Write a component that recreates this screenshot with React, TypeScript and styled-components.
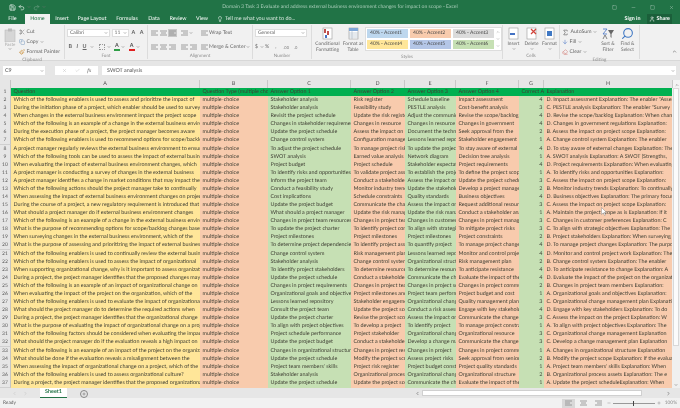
import React from 'react'
import styled, { createGlobalStyle } from 'styled-components'
import {
  Save, Undo2, Redo2, Lightbulb, User, Scissors, Copy, Paintbrush, Minus, Square, X, Check,
  ChevronDown, ChevronUp, ChevronLeft, ChevronRight, Plus, Search, Sigma, Eraser, ArrowDown,
} from 'lucide-react'

const COLS = '11px 189px 68px 83px 54px 51px 63px 25px 129px'

const YELLOW = '#ffe699'
const ORANGE = '#f8cbad'
const GREEN = '#c6e0b4'

const COLUMN_FILLS = [YELLOW, ORANGE, GREEN, ORANGE, GREEN, ORANGE, GREEN, ORANGE]
const HEADERS = ['Question', 'Question Type (multiple choice)', 'Answer Option 1', 'Answer Option 2', 'Answer Option 3', 'Answer Option 4', 'Correct Answer', 'Explanation']

// question, option 1-4, correct, explanation
const DATA: [string, string, string, string, string, number, string][] = [
  ['Which of the following enablers is used to assess and prioritize the impact of', 'Stakeholder analysis', 'Risk register', 'Schedule baseline', 'Impact assessment', 4, 'D. Impact assessment Explanation: The enabler "Assess'],
  ['During the initiation phase of a project, which enabler should be used to survey', 'Stakeholder analysis', 'Feasibility study', 'PESTLE analysis', 'Cost-benefit analysis', 3, 'C. PESTLE analysis Explanation: The enabler "Survey'],
  ['When changes in the external business environment impact the project scope', 'Revisit the project schedule', 'Update the risk register', 'Adjust the communication', 'Revise the scope/backlog', 4, 'D. Revise the scope/backlog Explanation: When changes'],
  ['Which of the following is an example of a change in the external business environment', 'Changes in stakeholder requirements', 'Changes in resource', 'Changes in resource', 'Changes in government', 4, 'D. Changes in government regulations Explanation:'],
  ['During the execution phase of a project, the project manager becomes aware', 'Update the project schedule', 'Assess the impact on', 'Document the technical', 'Seek approval from the', 2, 'B. Assess the impact on project scope Explanation:'],
  ['Which of the following enablers is used to recommend options for scope/backlog', 'Change control system', 'Configuration management', 'Lessons learned repository', 'Stakeholder engagement', 1, 'A. Change control system Explanation: The enabler'],
  ['A project manager regularly reviews the external business environment to ensure', 'To adjust the project schedule', 'To manage project risks', 'To update the project', 'To stay aware of external', 4, 'D. To stay aware of external changes Explanation: The'],
  ['Which of the following tools can be used to assess the impact of external business', 'SWOT analysis', 'Earned value analysis', 'Network diagram', 'Decision tree analysis', 1, 'A. SWOT analysis Explanation: A SWOT (Strengths,'],
  ['When evaluating the impact of external business environment changes, which', 'Project budget', 'Project schedule', 'Stakeholder expectations', 'Project requirements', 4, 'D. Project requirements Explanation: When evaluating'],
  ['A project manager is conducting a survey of changes in the external business', 'To identify risks and opportunities', 'To validate project assumptions', 'To establish the project', 'To define the project scope', 1, 'A. To identify risks and opportunities Explanation:'],
  ['A project manager identifies a change in market conditions that may impact the', 'Inform the project team', 'Conduct a stakeholder', 'Assess the impact on', 'Update the project schedule', 3, 'C. Assess the impact on project scope Explanation:'],
  ['Which of the following actions should the project manager take to continually', 'Conduct a feasibility study', 'Monitor industry trends', 'Update the stakeholder', 'Develop a project management', 2, 'B. Monitor industry trends Explanation: To continually'],
  ['When assessing the impact of external business environment changes on project', 'Cost implications', 'Schedule constraints', 'Quality standards', 'Business objectives', 4, 'D. Business objectives Explanation: The primary focus'],
  ['During the course of a project, a new regulatory requirement is introduced that', 'Update the project budget', 'Communicate the changes', 'Assess the impact on', 'Request additional resources', 3, 'C. Assess the impact on project scope Explanation:'],
  ['What should a project manager do if external business environment changes', 'What should a project manager', 'Update the risk management', 'Update the risk management', 'Conduct a stakeholder analysis', 1, 'A. Maintain the project scope as is Explanation: If it'],
  ['Which of the following is an example of a change in the external business environment', 'Changes in project team resources', 'Changes in project team', 'Changes in customer', 'Changes in project management', 3, 'C. Changes in customer preferences Explanation: C'],
  ['What is the purpose of recommending options for scope/backlog changes based', 'To update the project charter', 'To identify project constraints', 'To align with strategic', 'To mitigate project risks', 3, 'C. To align with strategic objectives Explanation: The'],
  ['When surveying changes in the external business environment, which of the', 'Project milestones', 'Project milestones', 'Project milestones', 'Project constraints', 2, 'B. Project stakeholders Explanation: When surveying'],
  ['What is the purpose of assessing and prioritizing the impact of external business', 'To determine project dependencies', 'To identify project assumptions', 'To quantify project', 'To manage project changes', 4, 'D. To manage project changes Explanation: The purpose'],
  ['Which of the following enablers is used to continually review the external business', 'Change control system', 'Risk management plan', 'Lessons learned repository', 'Monitor and control project', 4, 'D. Monitor and control project work Explanation: The'],
  ['Which of the following enablers is used to assess the impact of organizational', 'Stakeholder analysis', 'Change control system', 'Organizational structure', 'Risk management plan', 2, 'B. Change control system Explanation: The enabler'],
  ['When supporting organizational change, why is it important to assess organizational', 'To identify project stakeholders', 'To determine resource', 'To determine resource', 'To anticipate resistance', 4, 'D. To anticipate resistance to change Explanation: A'],
  ['During a project, the project manager identifies that the proposed changes may', 'Update the project schedule', 'Conduct a stakeholder', 'Communicate the changes', 'Evaluate the impact of the', 4, 'D. Evaluate the impact of the project on the organization'],
  ['Which of the following is an example of an impact of organizational change on', 'Changes in project requirements', 'Changes in project team', 'Changes in project scope', 'Changes in project communication', 2, 'B. Changes in project team members Explanation:'],
  ['When evaluating the impact of the project on the organization, which of the', 'Organizational goals and objectives', 'Project milestones and', 'Project team performance', 'Project budget and cost', 1, 'A. Organizational goals and objectives Explanation:'],
  ['Which of the following enablers is used to evaluate the impact of organizational', 'Lessons learned repository', 'Stakeholder engagement', 'Organizational change', 'Quality management plan', 3, 'C. Organizational change management plan Explanation'],
  ['What should the project manager do to determine the required actions when', 'Consult the project team', 'Update the project scope', 'Conduct a risk assessment', 'Engage with key stakeholders', 4, 'D. Engage with key stakeholders Explanation: To do'],
  ['During a project, the project manager identifies that the organizational change', 'Update the project charter', 'Revise the project scope', 'Assess the impact on', 'Communicate the changes', 3, 'C. Assess the impact on the project Explanation: W'],
  ['What is the purpose of evaluating the impact of organizational change on a project', 'To align with project objectives', 'To develop a project', 'To identify project', 'To manage project constraints', 1, 'A. To align with project objectives Explanation: The'],
  ['Which of the following factors should be considered when evaluating the impact', 'Project schedule performance', 'Project stakeholder', 'Organizational change', 'Organizational resource', 3, 'C. Organizational change management Explanation'],
  ['What should the project manager do if the evaluation reveals a high impact on', 'Update the project budget', 'Conduct a stakeholder', 'Develop a change management', 'Communicate the changes', 3, 'C. Develop a change management plan Explanation'],
  ['Which of the following is an example of an impact of the project on the organization', 'Changes in organizational structure', 'Changes in project resources', 'Changes in project', 'Changes in project communication', 1, 'A. Changes in organizational structure Explanation'],
  ['What should be done if the evaluation reveals a misalignment between the', 'Update the project schedule', 'Modify the project scope', 'Assess project risks', 'Seek approval from senior', 2, 'B. Modify the project scope Explanation: If the evaluation'],
  ['When assessing the impact of organizational change on a project, which of the', "Project team members' skills", 'Project risk register', 'Project budget constraints', 'Project quality standards', 1, "A. Project team members' skills Explanation: When"],
  ['Which of the following enablers is used to assess organizational culture?', 'Stakeholder analysis', 'Organizational process', 'Organizational change', 'Organizational structure', 2, 'B. Organizational process assets Explanation: The e'],
  ['During a project, the project manager identifies that the proposed organizational', 'Update the project schedule', 'Update the project scope', 'Communicate the changes', 'Evaluate the impact of the', 1, 'A. Update the project scheduleExplanation: When'],
]

const TABS: [string, number][] = [['Insert', 24], ['Page Layout', 36], ['Formulas', 34], ['Data', 20], ['Review', 28], ['View', 20]]

const ACCENTS: [string, string][] = [
  ['40% - Accent1', '#bdd7ee'], ['40% - Accent2', '#f8cbad'], ['40% - Accent3', '#dbdbdb'],
  ['40% - Accent4', '#ffe699'], ['40% - Accent5', '#b4c6e7'], ['40% - Accent6', '#c6e0b4'],
]

const Caret = () => <ChevronDown size={4} strokeWidth={3} color="#777" />

const AlignIcon = ({ on, mode = 0 }: { on?: boolean; mode?: number }) => (
  <ToolBtn $on={on}>
    <svg width="7" height="6" viewBox="0 0 7 6" stroke="#8a8a8a" strokeWidth="0.8">
      <path d={mode === 0 ? 'M0 1h7M0 3h5M0 5h7' : mode === 1 ? 'M0 1h7M1 3h5M0 5h7' : 'M0 1h7M2 3h5M0 5h7'} />
    </svg>
  </ToolBtn>
)

const LargeIcon = ({ kind }: { kind: string }) => (
  <svg width="13" height="13" viewBox="0 0 13 13">
    <rect x="2" y="1" width="9" height="11" fill="#fff" stroke="#9a9a9a" strokeWidth="0.6" />
    {kind === 'cond' && <path d="M3 2h2v4H3zM6 4h2v4H6z" fill="#c0504d" />}
    {kind === 'cond' && <path d="M4 8h2v3H4z" fill="#4472c4" />}
    {kind === 'table' && <path d="M2 1h9v3H2z" fill="#7fa7d8" />}
    {kind === 'table' && <path d="M2 6h9M2 8h9M2 10h9M5 4v8" stroke="#9ab" strokeWidth="0.5" />}
    {kind === 'insert' && <path d="M3 6h5v2H3z" fill="#4472c4" />}
    {kind === 'delete' && <path d="M6 2l5 5M11 2L6 7" stroke="#d0433a" strokeWidth="1.2" />}
    {kind === 'format' && <path d="M4 4h5v5H4z" fill="#3f78c4" />}
  </svg>
)

const App = () => {
  return (
    <Window>
      <GlobalStyle />
      <TitleBar>
        <Quick>
          <Save size={7} color="#fff" />
          <Undo2 size={7} color="#fff" />
          <Caret />
          <Redo2 size={7} color="#6f9f85" />
          <Caret />
        </Quick>
        <Title>Domain 3 Task 3 Evaluate and address external business environment changes for impact on scope - Excel</Title>
        <WindowControls>
          <Square size={5} color="#a8c8b6" />
          <Minus size={5} color="#a8c8b6" />
          <Square size={5} color="#a8c8b6" />
          <X size={5} color="#a8c8b6" />
        </WindowControls>
      </TitleBar>

      <TabBar>
        <Tab $w={25}>File</Tab>
        <Tab $w={25} $active>Home</Tab>
        {TABS.map(([name, w]) => (
          <Tab key={name} $w={w}>{name}</Tab>
        ))}
        <TellMe>
          <Lightbulb size={6} color="#fff" />
          Tell me what you want to do...
        </TellMe>
        <SignIn>Sign in</SignIn>
        <ShareButton>
          <User size={6} color="#fff" />
          Share
        </ShareButton>
      </TabBar>

      <Ribbon>
        <Group $w={65}>
          <GroupBody>
            <PasteButton>
              <svg width="12" height="14" viewBox="0 0 12 14">
                <rect x="1" y="2" width="10" height="12" fill="#d6d6d6" stroke="#b5b5b5" strokeWidth="0.5" />
                <rect x="4" y="0.5" width="4" height="3" fill="#bbb" />
              </svg>
              <FadedLabel>Paste</FadedLabel>
              <Caret />
            </PasteButton>
            <ToolColumn>
              <ToolRow><Scissors size={6} color="#7a7a7a" /><Label>Cut</Label></ToolRow>
              <ToolRow><Copy size={6} color="#7f9fc0" /><Label>Copy</Label><Caret /></ToolRow>
              <ToolRow><Paintbrush size={6} color="#c98a2e" /><Label>Format Painter</Label></ToolRow>
            </ToolColumn>
          </GroupBody>
          <GroupLabel>Clipboard</GroupLabel>
        </Group>

        <Group $w={83}>
          <GroupBody>
            <StackedRows>
              <ToolRow>
                <Dropdown $w={43}>Calibri<Caret /></Dropdown>
                <Dropdown $w={17}>11<Caret /></Dropdown>
                <BoldGlyph>A</BoldGlyph>
                <BoldGlyph>A</BoldGlyph>
              </ToolRow>
              <ToolRow>
                <BoldGlyph>B</BoldGlyph>
                <ItalicGlyph>I</ItalicGlyph>
                <UnderGlyph>U</UnderGlyph>
                <Caret />
                <BorderBox />
                <Caret />
                <ColorGlyph $bar="#2e9e46">A</ColorGlyph>
                <Caret />
                <ColorGlyph $bar="#e02020">A</ColorGlyph>
                <Caret />
              </ToolRow>
            </StackedRows>
          </GroupBody>
          <GroupLabel>Font</GroupLabel>
        </Group>

        <Group $w={105}>
          <GroupBody>
            <StackedRows>
              <TightRow>
                <AlignIcon />
                <AlignIcon mode={1} />
                <AlignIcon on />
                <Spacer $w={3} />
                <AlignIcon mode={2} />
                <Caret />
                <Spacer $w={7} />
                <AlignIcon />
                <Label>Wrap Text</Label>
              </TightRow>
              <TightRow>
                <AlignIcon />
                <AlignIcon mode={1} />
                <AlignIcon mode={2} />
                <Spacer $w={3} />
                <AlignIcon />
                <AlignIcon mode={2} />
                <Spacer $w={2} />
                <AlignIcon />
                <Label>Merge &amp; Center</Label>
                <Caret />
              </TightRow>
            </StackedRows>
          </GroupBody>
          <GroupLabel>Alignment</GroupLabel>
        </Group>

        <Group $w={59}>
          <GroupBody>
            <StackedRows>
              <ToolRow>
                <Dropdown $w={52}>General<Caret /></Dropdown>
              </ToolRow>
              <ToolRow>
                <Label>$</Label><Caret /><Label>%</Label><Spacer $w={3} /><Label>,</Label>
                <Spacer $w={4} /><Tiny>.00</Tiny><Spacer $w={2} /><Tiny>.0</Tiny>
              </ToolRow>
            </StackedRows>
          </GroupBody>
          <GroupLabel>Number</GroupLabel>
        </Group>

        <Group $w={191}>
          <GroupBody>
            <BigButton $w={27}>
              <LargeIcon kind="cond" />
              <BigLabel>Conditional Formatting</BigLabel>
            </BigButton>
            <BigButton $w={22}>
              <LargeIcon kind="table" />
              <BigLabel>Format as Table</BigLabel>
            </BigButton>
            <Gallery>
              <GalleryGrid>
                {ACCENTS.map(([name, bg]) => (
                  <StyleChip key={name} $bg={bg}>{name}</StyleChip>
                ))}
              </GalleryGrid>
              <GalleryScroll>
                <ChevronUp size={4} color="#777" />
                <ChevronDown size={4} color="#777" />
                <ChevronDown size={4} color="#777" />
              </GalleryScroll>
            </Gallery>
          </GroupBody>
          <GroupLabel>Styles</GroupLabel>
        </Group>

        <Group $w={57}>
          <GroupBody>
            {[['Insert', 'insert'], ['Delete', 'delete'], ['Format', 'format']].map(([name, kind]) => (
              <BigButton key={name} $w={17}>
                <LargeIcon kind={kind} />
                <BigLabel>{name}</BigLabel>
                <Caret />
              </BigButton>
            ))}
          </GroupBody>
          <GroupLabel>Cells</GroupLabel>
        </Group>

        <Group $w={80}>
          <GroupBody>
            <EditColumn>
              <ToolRow><Sigma size={7} color="#555" /><Label>AutoSum</Label><Caret /></ToolRow>
              <ToolRow><ArrowDown size={6} color="#4472c4" /><Label>Fill</Label><Caret /></ToolRow>
              <ToolRow><Eraser size={6} color="#d0706a" /><Label>Clear</Label><Caret /></ToolRow>
            </EditColumn>
            <BigButton $w={18}>
              <svg width="13" height="13" viewBox="0 0 13 13">
                <path d="M1 2h4L1 7h4" stroke="#4472c4" strokeWidth="0.8" fill="none" />
                <path d="M1 12l2-4 2 4" stroke="#555" strokeWidth="0.7" fill="none" />
                <path d="M6 3h6L9.5 7v4L8.5 10V7z" fill="#666" />
              </svg>
              <BigLabel>Sort &amp; Filter</BigLabel>
            </BigButton>
            <BigButton $w={19}>
              <Search size={13} color="#3f78c4" style={{ transform: 'scaleX(-1)' }} />
              <BigLabel>Find &amp; Select</BigLabel>
            </BigButton>
          </GroupBody>
          <GroupLabel>Editing</GroupLabel>
        </Group>

        <Collapse><ChevronUp size={5} strokeWidth={3} color="#666" /></Collapse>
      </Ribbon>

      <FormulaBar>
        <NameBox>C9<Caret /></NameBox>
        <FxBox>
          <X size={5} color="#bbb" />
          <Check size={5} color="#bbb" />
          <FxGlyph>fx</FxGlyph>
        </FxBox>
        <FormulaInput>
          SWOT analysis
          <Caret />
        </FormulaInput>
      </FormulaBar>

      <ColumnHeads>
        <Corner />
        {['A', 'B', 'C', 'D', 'E', 'F', 'G', 'H'].map((c) => (
          <ColumnHead key={c}>{c}</ColumnHead>
        ))}
        <ScrollUp><ChevronUp size={4} strokeWidth={3} color="#666" /></ScrollUp>
      </ColumnHeads>

      <SheetArea>
        <Sheet>
          <SheetRow>
            <RowHead>1</RowHead>
            {HEADERS.map((h) => (
              <Cell key={h} $bg="#00b050">{h}</Cell>
            ))}
          </SheetRow>
          {DATA.map((r, i) => (
            <SheetRow key={i}>
              <RowHead>{i + 2}</RowHead>
              <Cell $bg={COLUMN_FILLS[0]}>{r[0]}</Cell>
              <Cell $bg={COLUMN_FILLS[1]}>multiple-choice</Cell>
              <Cell $bg={COLUMN_FILLS[2]}>{r[1]}</Cell>
              <Cell $bg={COLUMN_FILLS[3]}>{r[2]}</Cell>
              <Cell $bg={COLUMN_FILLS[4]}>{r[3]}</Cell>
              <Cell $bg={COLUMN_FILLS[5]}>{r[4]}</Cell>
              <Cell $bg={COLUMN_FILLS[6]} $right>{r[5]}</Cell>
              <Cell $bg={COLUMN_FILLS[7]}>{r[6]}</Cell>
            </SheetRow>
          ))}
        </Sheet>
        <VScroll>
          <VThumb />
          <ChevronDown size={4} strokeWidth={3} color="#666" />
        </VScroll>
        <Pointer viewBox="0 0 6 9" width="6" height="9">
          <path d="M0.5 0.5v7l1.8-1.6 1.2 2.6 1-.5-1.2-2.5h2.2z" fill="#fff" stroke="#777" strokeWidth="0.4" />
        </Pointer>
      </SheetArea>

      <SheetTabs>
        <SheetNav>
          <ChevronLeft size={5} color="#bbb" />
          <ChevronRight size={5} color="#bbb" />
        </SheetNav>
        <SheetTab>Sheet1</SheetTab>
        <AddSheet><Plus size={4} strokeWidth={3} color="#666" /></AddSheet>
        <HScroll>
          <ChevronLeft size={5} strokeWidth={3} color="#666" />
          <HThumb />
          <ChevronRight size={5} strokeWidth={3} color="#666" />
        </HScroll>
      </SheetTabs>

      <StatusBar>
        Ready
        <StatusRight>
          <ViewBtn $on><AlignIcon /></ViewBtn>
          <ViewBtn><AlignIcon mode={1} /></ViewBtn>
          <ViewBtn><AlignIcon mode={2} /></ViewBtn>
          <Minus size={4} color="#666" />
          <ZoomTrack><ZoomThumb /></ZoomTrack>
          <Plus size={4} color="#666" />
          <ZoomPct>100%</ZoomPct>
        </StatusRight>
      </StatusBar>
    </Window>
  )
}

const GlobalStyle = createGlobalStyle`
  html, body {
    margin: 0;
    padding: 0;
    overflow: hidden;
  }
  body {
    font-family: "Lato", "Liberation Sans", sans-serif;
    text-rendering: geometricPrecision;
  }
`

const Window = styled.div`
  width: 680px;
  height: 408px;
  display: flex;
  flex-direction: column;
  overflow: hidden;
  background: #e6e6e6;
  filter: blur(0.3px);
`

const TitleBar = styled.div`
  height: 14px;
  background: #217346;
  display: grid;
  grid-template-columns: 1fr auto 1fr;
  align-items: center;
`

const Quick = styled.div`
  display: flex;
  align-items: center;
  gap: 2px;
  padding-left: 9px;
`

const Title = styled.div`
  font-size: 5.1px;
  color: #a9cdb9;
  white-space: nowrap;
`

const WindowControls = styled.div`
  display: flex;
  justify-content: flex-end;
  gap: 14px;
  padding-right: 6px;
`

const TabBar = styled.div`
  height: 10px;
  background: #217346;
  display: flex;
  align-items: stretch;
  color: #fff;
  font-size: 5.4px;
`

const Tab = styled.div<{ $w: number; $active?: boolean }>`
  width: ${(p) => p.$w}px;
  display: flex;
  align-items: center;
  justify-content: center;
  background: ${(p) => (p.$active ? '#f1f1f1' : 'transparent')};
  color: ${(p) => (p.$active ? '#217346' : '#fff')};
`

const TellMe = styled.div`
  display: flex;
  align-items: center;
  gap: 2px;
  margin-left: 5px;
  color: #d8e8df;
`

const SignIn = styled.div`
  margin-left: auto;
  align-self: center;
  font-weight: 700;
`

const ShareButton = styled.div`
  display: flex;
  align-items: center;
  gap: 1px;
  margin: 0 8px 0 7px;
  padding: 0 2px;
  font-weight: 700;
  background: #1b5f3a;
`

const Ribbon = styled.div`
  position: relative;
  height: 37px;
  background: #f1f1f1;
  display: flex;
  border-bottom: 1px solid #d8d8d8;
  box-sizing: border-box;
`

const Group = styled.div<{ $w: number }>`
  width: ${(p) => p.$w}px;
  box-sizing: border-box;
  display: flex;
  flex-direction: column;
  border-right: 1px solid #dcdcdc;
  margin: 1px 0;
`

const GroupBody = styled.div`
  flex: 1;
  display: flex;
  align-items: flex-start;
  gap: 1px;
  padding: 2px 2px 0;
  color: #666;
  font-size: 5.2px;
`

const GroupLabel = styled.div`
  height: 7px;
  line-height: 7px;
  text-align: center;
  font-size: 4.6px;
  color: #8a8a8a;
`

const PasteButton = styled.div`
  width: 16px;
  display: flex;
  flex-direction: column;
  align-items: center;
  padding-top: 1px;
`

const FadedLabel = styled.div`
  font-size: 4.4px;
  color: #aaa;
`

const ToolColumn = styled.div`
  display: flex;
  flex-direction: column;
  gap: 2px;
  padding-top: 1px;
`

const EditColumn = styled(ToolColumn)`
  width: 36px;
  flex-shrink: 0;
`

const StackedRows = styled.div`
  display: flex;
  flex-direction: column;
  gap: 6px;
  padding-top: 2px;
`

const ToolRow = styled.div`
  display: flex;
  align-items: center;
  gap: 1.5px;
  height: 8px;
  white-space: nowrap;
`

const TightRow = styled(ToolRow)`
  gap: 0;
`

const Label = styled.span`
  font-size: 5.2px;
  color: #666;
`

const Tiny = styled.span`
  font-size: 4px;
  color: #777;
`

const Spacer = styled.span<{ $w: number }>`
  display: inline-block;
  width: ${(p) => p.$w}px;
`

const Dropdown = styled.div<{ $w: number }>`
  width: ${(p) => p.$w}px;
  height: 8px;
  box-sizing: border-box;
  background: #fff;
  border: 0.5px solid #ddd;
  padding: 0 1px 0 2px;
  display: flex;
  align-items: center;
  justify-content: space-between;
  font-size: 5px;
  color: #666;
`

const BoldGlyph = styled.span`
  font-weight: 700;
  font-size: 5.4px;
  color: #666;
  padding: 0 1.5px;
`

const ItalicGlyph = styled(BoldGlyph)`
  font-style: italic;
`

const UnderGlyph = styled(BoldGlyph)`
  text-decoration: underline;
`

const BorderBox = styled.span`
  width: 6px;
  height: 6px;
  margin-left: 4px;
  border: 0.5px dotted #999;
  box-sizing: border-box;
`

const ColorGlyph = styled.span<{ $bar: string }>`
  font-size: 5.4px;
  font-weight: 700;
  line-height: 5px;
  margin-left: 2px;
  padding: 0 1px;
  color: #555;
  border-bottom: 2px solid ${(p) => p.$bar};
`

const ToolBtn = styled.span<{ $on?: boolean }>`
  display: inline-flex;
  align-items: center;
  justify-content: center;
  width: 9px;
  height: 8px;
  background: ${(p) => (p.$on ? '#c8c8c8' : 'transparent')};
`

const BigButton = styled.div<{ $w: number }>`
  width: ${(p) => p.$w}px;
  display: flex;
  flex-direction: column;
  align-items: center;
  text-align: center;
  flex-shrink: 0;
`

const BigLabel = styled.div`
  font-size: 4.8px;
  line-height: 6px;
  color: #666;
  margin-top: 1px;
`

const Gallery = styled.div`
  display: flex;
  border: 0.5px solid #ddd;
  background: #fff;
  padding: 1px;
`

const GalleryGrid = styled.div`
  display: grid;
  grid-template-columns: repeat(3, 41px);
  grid-auto-rows: 9px;
  gap: 2px;
`

const StyleChip = styled.div<{ $bg: string }>`
  background: ${(p) => p.$bg};
  font-size: 5px;
  line-height: 9px;
  padding-left: 3px;
  color: #444;
  white-space: nowrap;
`

const GalleryScroll = styled.div`
  display: flex;
  flex-direction: column;
  justify-content: space-around;
  margin-left: 2px;
`

const Collapse = styled.div`
  position: absolute;
  right: 3px;
  bottom: 2px;
`

const FormulaBar = styled.div`
  height: 19px;
  display: flex;
  align-items: center;
  gap: 4px;
  padding: 0 4px 0 3px;
  background: #e6e6e6;
  font-size: 5.4px;
  color: #555;
`

const NameBox = styled.div`
  width: 42px;
  height: 9px;
  background: #fff;
  display: flex;
  align-items: center;
  justify-content: space-between;
  padding: 0 1px 0 2px;
  box-sizing: border-box;
`

const FxBox = styled.div`
  width: 43px;
  margin-left: 6px;
  height: 9px;
  background: #fff;
  display: flex;
  align-items: center;
  justify-content: space-around;
  box-sizing: border-box;
  padding: 0 3px;
`

const FxGlyph = styled.span`
  font-style: italic;
  font-family: "Liberation Serif", serif;
  font-size: 5.4px;
`

const FormulaInput = styled.div`
  flex: 1;
  height: 9px;
  background: #fff;
  display: flex;
  align-items: center;
  justify-content: space-between;
  padding: 0 1px 0 5px;
`

const ColumnHeads = styled.div`
  height: 8px;
  display: grid;
  grid-template-columns: ${COLS} 8px;
  background: #e6e6e6;
`

const Corner = styled.div`
  border-right: 0.5px solid #c4c4c4;
  border-bottom: 0.5px solid #c4c4c4;
`

const ColumnHead = styled.div`
  font-size: 5.4px;
  line-height: 8px;
  text-align: center;
  color: #555;
  border-right: 0.5px solid #c8c8c8;
  border-bottom: 0.5px solid #c4c4c4;
`

const ScrollUp = styled.div`
  display: flex;
  align-items: center;
  justify-content: center;
  background: #f4f4f4;
`

const SheetArea = styled.div`
  position: relative;
  height: 300px;
  display: flex;
  overflow: hidden;
`

const Sheet = styled.div`
  width: 672px;
  display: flex;
  flex-direction: column;
`

const SheetRow = styled.div`
  height: 8.09px;
  flex-shrink: 0;
  display: grid;
  grid-template-columns: ${COLS};
`

const RowHead = styled.div`
  background: #e6e6e6;
  border-right: 0.5px solid #c4c4c4;
  border-bottom: 0.5px solid #cfcfcf;
  box-sizing: border-box;
  font-size: 5px;
  line-height: 8px;
  text-align: center;
  color: #555;
`

const Cell = styled.div<{ $bg: string; $right?: boolean }>`
  background: ${(p) => p.$bg};
  overflow: hidden;
  white-space: nowrap;
  font-size: 5.4px;
  line-height: 8.09px;
  color: #3f3f34;
  padding: 0 ${(p) => (p.$right ? '1.5px' : '0')} 0 ${(p) => (p.$right ? '0' : '2.5px')};
  text-align: ${(p) => (p.$right ? 'right' : 'left')};
`

const VScroll = styled.div`
  flex: 1;
  display: flex;
  flex-direction: column;
  align-items: center;
  background: #f0f0f0;
  padding-bottom: 1px;
`

const VThumb = styled.div`
  flex: 1;
  width: 6px;
  margin-bottom: 37px;
  background: #fbfbfb;
  border: 0.5px solid #d8d8d8;
  box-sizing: border-box;
`

const Pointer = styled.svg`
  position: absolute;
  left: 601px;
  top: 119px;
`

const SheetTabs = styled.div`
  height: 10px;
  display: flex;
  align-items: stretch;
  background: #e6e6e6;
`

const SheetNav = styled.div`
  width: 40px;
  display: flex;
  align-items: center;
  justify-content: center;
  gap: 6px;
`

const SheetTab = styled.div`
  width: 27px;
  background: #fff;
  color: #217346;
  font-size: 5.4px;
  font-weight: 700;
  text-align: center;
  line-height: 9px;
  border-bottom: 1px solid #217346;
  box-sizing: border-box;
`

const AddSheet = styled.div`
  width: 6px;
  height: 6px;
  margin: 2px 0 0 13px;
  border: 0.5px solid #888;
  border-radius: 50%;
  display: flex;
  align-items: center;
  justify-content: center;
`

const HScroll = styled.div`
  margin-left: 327px;
  flex: 1;
  padding-right: 9px;
  display: flex;
  align-items: center;
  gap: 2px;
`

const HThumb = styled.div`
  flex: 1;
  margin-right: 22px;
  height: 6px;
  background: #fff;
  border: 0.5px solid #d0d0d0;
  box-sizing: border-box;
`

const StatusBar = styled.div`
  height: 10px;
  display: flex;
  align-items: center;
  justify-content: space-between;
  padding-left: 3px;
  background: #f1f1f1;
  font-size: 4.8px;
  color: #555;
`

const StatusRight = styled.div`
  display: flex;
  align-items: center;
  gap: 2px;
  padding-right: 3px;
`

const ViewBtn = styled.span<{ $on?: boolean }>`
  display: inline-flex;
  width: 13px;
  height: 9px;
  justify-content: center;
  align-items: center;
  background: ${(p) => (p.$on ? '#d8d8d8' : 'transparent')};
`

const ZoomTrack = styled.div`
  position: relative;
  width: 42px;
  height: 1px;
  background: #999;
`

const ZoomThumb = styled.span`
  position: absolute;
  left: 20px;
  top: -2px;
  width: 1.5px;
  height: 5px;
  background: #444;
`

const ZoomPct = styled.span`
  margin-left: 2px;
  color: #888;
`

export default App
